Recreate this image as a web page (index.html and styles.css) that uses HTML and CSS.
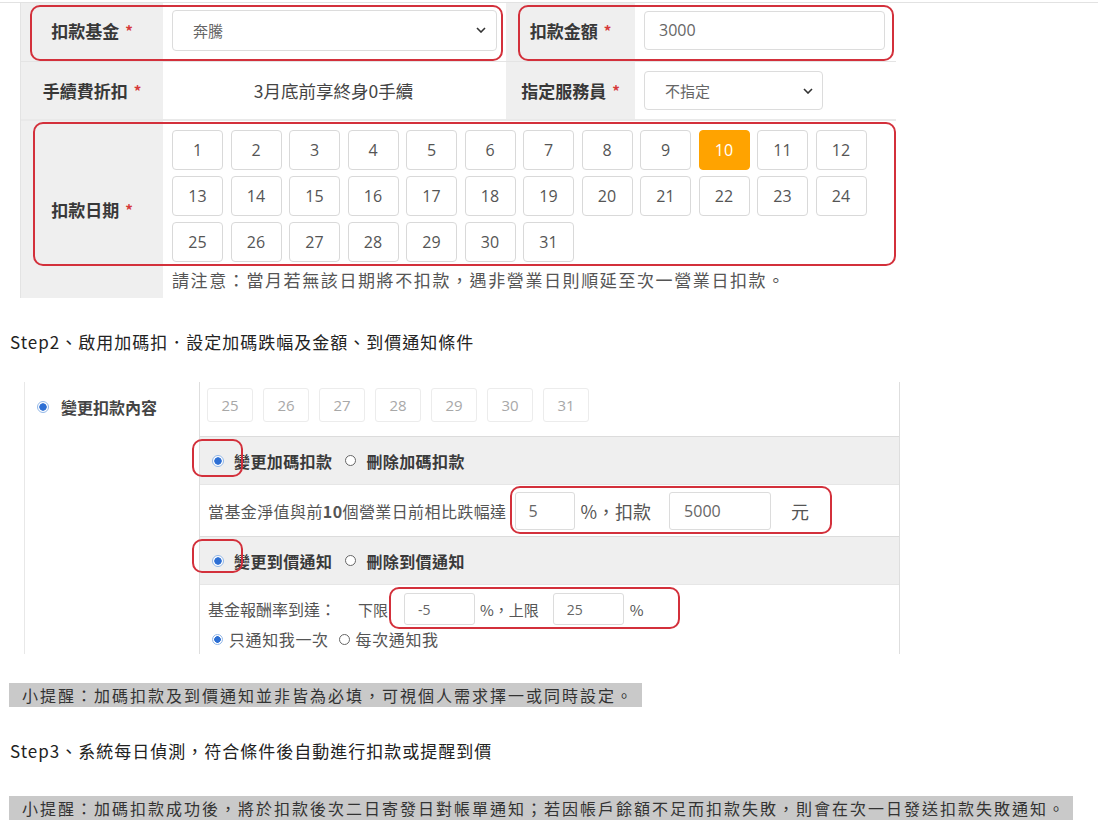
FILE: index.html
```html
<!DOCTYPE html>
<html lang="zh-Hant">
<head>
<meta charset="utf-8">
<title>加碼扣設定</title>
<link rel="stylesheet" href="styles.css">
</head>
<body>
<div class="rule"></div>

<div class="fig1">
  <div class="lab r1">扣款基金<span class="req">*</span></div>
  <div class="val r1"><div class="select sel-fund"><span>奔騰</span><svg class="chev" width="10" height="6" viewBox="0 0 10 6"><path d="M1 1l4 4 4-4" fill="none" stroke="#333" stroke-width="1.6"/></svg></div></div>
  <div class="lab r1">扣款金額<span class="req">*</span></div>
  <div class="val r1"><div class="input inp-amt">3000</div></div>

  <div class="lab r2">手續費折扣<span class="req">*</span></div>
  <div class="val r2 center"><span class="fee">3月底前享終身0手續</span></div>
  <div class="lab r2">指定服務員<span class="req">*</span></div>
  <div class="val r2"><div class="select sel-staff"><span>不指定</span><svg class="chev" width="10" height="6" viewBox="0 0 10 6"><path d="M1 1l4 4 4-4" fill="none" stroke="#333" stroke-width="1.6"/></svg></div></div>

  <div class="lab r3">扣款日期<span class="req">*</span></div>
  <div class="val r3 days-cell">
    <div class="days">
      <div class="day">1</div><div class="day">2</div><div class="day">3</div><div class="day">4</div><div class="day">5</div><div class="day">6</div><div class="day">7</div><div class="day">8</div><div class="day">9</div><div class="day active">10</div><div class="day">11</div><div class="day">12</div>
      <div class="day">13</div><div class="day">14</div><div class="day">15</div><div class="day">16</div><div class="day">17</div><div class="day">18</div><div class="day">19</div><div class="day">20</div><div class="day">21</div><div class="day">22</div><div class="day">23</div><div class="day">24</div>
      <div class="day">25</div><div class="day">26</div><div class="day">27</div><div class="day">28</div><div class="day">29</div><div class="day">30</div><div class="day">31</div>
    </div>
    <div class="note">請注意：當月若無該日期將不扣款，遇非營業日則順延至次一營業日扣款。</div>
  </div>

  <div class="mark m-a"></div>
  <div class="mark m-b"></div>
  <div class="mark m-c"></div>
</div>

<p class="step step2">Step2、啟用加碼扣．設定加碼跌幅及金額、到價通知條件</p>

<div class="fig2">
  <div class="side">
    <div class="side-label"><span class="radio on"></span><span>變更扣款內容</span></div>
  </div>
  <div class="main">
    <div class="row-a">
      <div class="dday">25</div><div class="dday">26</div><div class="dday">27</div><div class="dday">28</div><div class="dday">29</div><div class="dday">30</div><div class="dday">31</div>
    </div>
    <div class="row-g">
      <span class="radio on"></span><span class="opt">變更加碼扣款</span>
      <span class="radio off"></span><span class="opt">刪除加碼扣款</span>
    </div>
    <div class="row-w row-c">
      <span class="txt">當基金淨值與前<b>10</b>個營業日前相比跌幅達</span>
      <div class="input inp-pct">5</div>
      <span class="txt-lg">%，扣款</span>
      <div class="input inp-5000">5000</div>
      <span class="txt-lg yuan">元</span>
    </div>
    <div class="row-g">
      <span class="radio on"></span><span class="opt">變更到價通知</span>
      <span class="radio off"></span><span class="opt">刪除到價通知</span>
    </div>
    <div class="row-w row-e">
      <div class="line1">
        <span class="txt">基金報酬率到達：</span>
        <span class="txt-sm lower">下限</span>
        <div class="input inp-range first">-5</div>
        <span class="txt-sm pct">%，上限</span>
        <div class="input inp-range second">25</div>
        <span class="txt-sm pct2">%</span>
      </div>
      <div class="line2">
        <span class="radio on sm"></span><span class="opt2">只通知我一次</span>
        <span class="radio off sm"></span><span class="opt2">每次通知我</span>
      </div>
    </div>
  </div>

  <div class="mark m-r1"></div>
  <div class="mark m-inp"></div>
  <div class="mark m-r2"></div>
  <div class="mark m-rng"></div>
</div>

<p class="tip"><span class="tip1">小提醒：加碼扣款及到價通知並非皆為必填，可視個人需求擇一或同時設定。</span></p>

<p class="step step3">Step3、系統每日偵測，符合條件後自動進行扣款或提醒到價</p>

<p class="tip tip-b"><span class="tip2">小提醒：加碼扣款成功後，將於扣款後次二日寄發日對帳單通知；若因帳戶餘額不足而扣款失敗，則會在次一日發送扣款失敗通知。</span></p>
</body>
</html>
```

FILE: styles.css
```css
* { box-sizing: border-box; }

html, body {
  margin: 0;
  padding: 0;
  background: #fff;
}

body {
  width: 1098px;
  font-family: "Noto Sans CJK TC", "Noto Sans", sans-serif;
  color: #333;
}

.rule {
  height: 3px;
  border-bottom: 1px solid #e2e2e2;
}

/* ---------- figure 1 ---------- */
.fig1 {
  position: relative;
  margin-left: 20px;
  width: 875px;
  display: grid;
  grid-template-columns: 142px 343px 129px 261px;
  grid-template-rows: 59px 59px 177px;
  border-left: 1px solid #e3e3e3;
  border-right: 1px solid #dedede;
}

.lab {
  background: #efefef;
  display: flex;
  align-items: center;
  justify-content: center;
  font-size: 17px;
  font-weight: 700;
  color: #383838;
}

.req {
  color: #d6393a;
  font-size: 15px;
  margin-left: 6px;
  font-weight: 700;
}

.val {
  background: #fff;
  display: flex;
  align-items: center;
  padding-left: 9px;
}

.val.center {
  justify-content: center;
  padding-left: 0;
}

.r1 {
  border-bottom: 1px solid #e4e4e4;
  padding-bottom: 4px;
}
.r2 { border-bottom: 2px solid #e9e9e9; }

.select, .input {
  background: #fff;
  border: 1px solid #dcdcdc;
  border-radius: 4px;
  display: flex;
  align-items: center;
  color: #666;
  font-family: "Open Sans", "Noto Sans CJK TC", sans-serif;
}

.select {
  justify-content: space-between;
}

.sel-fund {
  width: 325px;
  height: 41px;
  padding: 0 10px 0 20px;
  font-size: 15px;
}

.sel-staff {
  width: 179px;
  height: 39px;
  padding: 0 9px 0 20px;
  font-size: 15px;
}

.inp-amt {
  width: 241px;
  height: 39px;
  padding-left: 14px;
  font-size: 16px;
}

.fee {
  font-size: 17.5px;
  color: #444;
  margin-right: 2px;
}

.days-cell {
  grid-column: 2 / 5;
  flex-direction: column;
  align-items: flex-start;
  padding-top: 9px;
}

.days {
  display: grid;
  grid-template-columns: repeat(12, 51px);
  grid-auto-rows: 40px;
  column-gap: 7.5px;
  row-gap: 6px;
}

.day {
  border: 1px solid #d9d9d9;
  border-radius: 4px;
  display: flex;
  align-items: center;
  justify-content: center;
  font-family: "Open Sans", sans-serif;
  font-size: 16px;
  color: #555;
  background: #fff;
}

.day.active {
  background: #ffa300;
  border-color: #ffa300;
  color: #fff;
}

.note {
  margin-top: 6px;
  font-size: 17px;
  letter-spacing: 1.6px;
  line-height: 24px;
  color: #555;
}

/* red annotation outlines */
.mark {
  position: absolute;
  border: 2px solid #d3303b;
  border-radius: 10px;
  pointer-events: none;
}

.m-a { left: 9px;  top: 2px;   width: 473px; height: 56px; }
.m-b { left: 497px; top: 2px;  width: 376px; height: 56px; }
.m-c { left: 12px; top: 119px; width: 863px; height: 144px; }

/* ---------- text ---------- */
.step {
  margin: 0 0 0 10px;
  font-size: 17px;
  letter-spacing: 1px;
  line-height: 24px;
  color: #222;
}

.step2 { margin-top: 32px; }
.step3 { margin-top: 32px; }

.tip {
  margin: 29px 0 0 9px;
  height: 24px;
}

.tip-b { margin-top: 33px; }

.tip span {
  display: inline-block;
  background: #c9c9c9;
  line-height: 24px;
  height: 24px;
  padding-left: 13px;
  font-size: 16px;
  letter-spacing: 2px;
  color: #333;
}

.tip1 { padding-right: 8px; }
.tip2 { padding-right: 7px; }

/* ---------- figure 2 ---------- */
.fig2 {
  position: relative;
  margin: 28px 0 0 24px;
  width: 876px;
  height: 272px;
  display: grid;
  grid-template-columns: 175px 701px;
}

.side {
  border-left: 1px solid #e8e8e8;
  padding: 15px 0 0 12px;
}

.side-label {
  display: flex;
  align-items: center;
  gap: 12px;
  font-size: 16px;
  font-weight: 700;
  color: #444;
  line-height: 20px;
}

.main {
  border-left: 1px solid #dedede;
  border-right: 1px solid #dedede;
  display: flex;
  flex-direction: column;
}

.row-a {
  height: 54px;
  padding: 6px 0 0 7px;
  display: flex;
  gap: 10px;
}

.dday {
  width: 46px;
  height: 34px;
  border: 1px solid #ececec;
  border-radius: 3px;
  display: flex;
  align-items: center;
  justify-content: center;
  font-family: "Open Sans", sans-serif;
  font-size: 15px;
  color: #a8a8a8;
}

.row-g {
  height: 48px;
  background: #efefef;
  border-top: 1px solid #dcdcdc;
  display: flex;
  align-items: center;
  padding-left: 12px;
}

.opt {
  font-size: 16px;
  font-weight: 700;
  color: #3a3a3a;
  letter-spacing: 0.4px;
  margin-left: 10px;
  margin-right: 13px;
}

.radio {
  display: inline-block;
  width: 12px;
  height: 12px;
  border-radius: 50%;
  flex: none;
}

.radio.on {
  border: 1.5px solid #93b8e8;
  background: radial-gradient(circle, #2d6fd4 0 3.4px, #fff 4px);
}

.radio.off {
  border: 1.3px solid #666;
  background: #fff;
  width: 11px;
  height: 11px;
}

.radio.sm { width: 11px; height: 11px; }
.radio.on.sm { background: radial-gradient(circle, #2d6fd4 0 3px, #fff 3.6px); }

.row-w {
  border-top: 1px solid #e6e6e6;
  background: #fff;
  padding-left: 8px;
}

.row-c {
  height: 52px;
  display: flex;
  align-items: center;
}

.txt {
  font-size: 16px;
  color: #555;
}

.row-c .txt { letter-spacing: 0.4px; }

.txt b { font-weight: 600; }

.txt-lg {
  font-size: 18px;
  color: #555;
}

.txt-sm {
  font-size: 15px;
  color: #555;
}

.inp-pct {
  width: 60px;
  height: 38px;
  margin: 0 6px 0 8px;
  padding-left: 13px;
  font-size: 16px;
  border-radius: 3px;
}

.inp-5000 {
  width: 102px;
  height: 38px;
  margin-left: 18px;
  padding-left: 14px;
  font-size: 16px;
  border-radius: 3px;
}

.yuan { margin-left: 20px; }

.row-e {
  height: 70px;
  padding-top: 8px;
}

.line1 {
  height: 32px;
  display: flex;
  align-items: center;
}

.lower { margin-left: 22px; }

.inp-range {
  width: 71px;
  height: 32px;
  padding-left: 13px;
  font-size: 14px;
  border-radius: 3px;
}

.inp-range.first { margin-left: 16px; }
.inp-range.second { margin-left: 14px; }
.pct { margin-left: 5px; }
.pct2 { margin-left: 6px; }

.line2 {
  height: 24px;
  margin-top: 2px;
  display: flex;
  align-items: center;
  padding-left: 4px;
}

.opt2 {
  font-size: 16px;
  letter-spacing: 0.6px;
  color: #555;
  margin-left: 6px;
  margin-right: 10px;
}

/* fig2 outlines */
.m-r1  { left: 168px; top: 57px;  width: 51px;  height: 38px; }
.m-inp { left: 486px; top: 104px; width: 322px; height: 48px; }
.m-r2  { left: 168px; top: 157px; width: 51px;  height: 34px; }
.m-rng { left: 365px; top: 205px; width: 291px; height: 42px; }
```
